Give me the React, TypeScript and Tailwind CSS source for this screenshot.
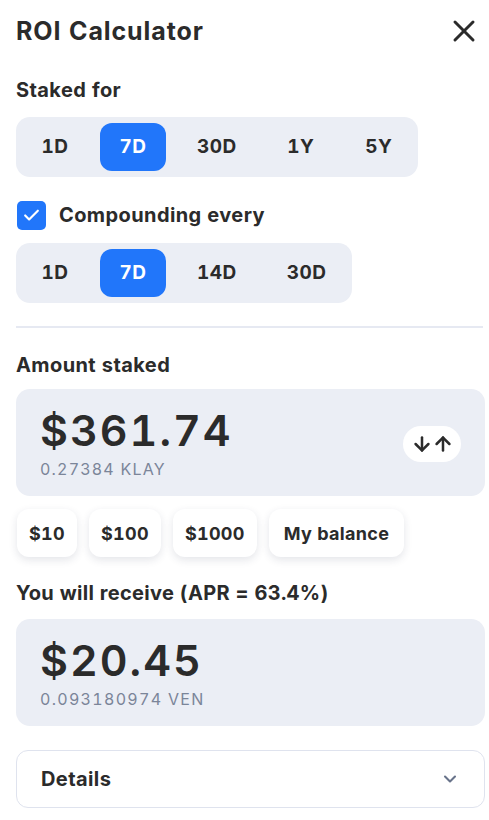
import React, { useState } from 'react';
import { X, ArrowDown, ArrowUp, ChevronDown, Check } from 'lucide-react';

const stakeOptions = ['1D', '7D', '30D', '1Y', '5Y'];
const compoundOptions = ['1D', '7D', '14D', '30D'];
const quickAmounts = ['$10', '$100', '$1000', 'My balance'];

interface SegmentProps {
    options: string[];
    value: string;
    onChange: (v: string) => void;
}

const Segment: React.FC<SegmentProps> = ({ options, value, onChange }) => (
    <div className="inline-flex gap-3 p-1.5 bg-[#ebeef5] rounded-[14px]">
        {options.map(opt => (
            <button
                key={opt}
                onClick={() => onChange(opt)}
                className={`h-12 min-w-[66px] px-[19px] rounded-[12px] text-[19px] font-bold tracking-[0.5px] ${
                    value === opt ? 'bg-[#2176fa] text-white' : 'text-[#2b2b2b]'
                }`}
            >
                {opt}
            </button>
        ))}
    </div>
);

const App: React.FC = () => {
    const [staked, setStaked] = useState('7D');
    const [compound, setCompound] = useState('7D');
    const [compounding, setCompounding] = useState(true);

    return (
        <div className="w-[489px] min-h-[820px] bg-white pl-4 pr-1 text-[#2b2b2b] font-['Inter',sans-serif] tabular-nums">
            <div className="flex items-center justify-between h-8 mt-[15px] pr-1">
                <h1 className="text-[25px] font-bold leading-8 tracking-[0.9px]">ROI Calculator</h1>
                <X size={36} strokeWidth={2} className="text-[#2b2b2b] -mr-[1px]" />
            </div>

            <div className="mt-[29px] text-[20px] font-bold leading-7 tracking-[0.4px]">Staked for</div>
            <div className="mt-[13px]">
                <Segment options={stakeOptions} value={staked} onChange={setStaked} />
            </div>

            <label className="flex items-center gap-[13px] mt-[23px] h-[30px] cursor-pointer">
                <span
                    onClick={() => setCompounding(!compounding)}
                    className="ml-[1px] w-[29px] h-[29px] rounded-[5px] bg-[#2176fa] flex items-center justify-center"
                >
                    {compounding && <Check size={19} strokeWidth={2.75} className="text-white" />}
                </span>
                <span className="text-[20px] font-bold tracking-[0.4px]">Compounding every</span>
            </label>
            <div className="mt-[13px]">
                <Segment options={compoundOptions} value={compound} onChange={setCompound} />
            </div>

            <div className="mt-[23px] h-[2px] bg-[#e6e9f2] mr-[2px]" />

            <div className="mt-[23px] text-[20px] font-bold leading-7 tracking-[0.4px]">Amount staked</div>
            <div className="mt-[10px] h-[107px] bg-[#ebeef5] rounded-[14px] pl-6 pr-6 flex items-center justify-between">
                <div className="flex flex-col">
                    <span className="text-[43px] font-semibold leading-[48px] tracking-[2px]">$361.74</span>
                    <span className="text-[16px] text-[#7b8599] leading-5 mt-[5px] tracking-[1.2px]">0.27384 KLAY</span>
                </div>
                <button className="w-[58px] h-9 rounded-full bg-white flex items-center justify-center mt-[2px]">
                    <ArrowDown size={22} strokeWidth={2.75} className="-mr-[1px]" />
                    <ArrowUp size={22} strokeWidth={2.75} />
                </button>
            </div>

            <div className="flex gap-3 mt-[13px] pl-[1px]">
                {quickAmounts.map(a => (
                    <button
                        key={a}
                        className={`h-12 rounded-[12px] bg-white text-[18px] font-bold tracking-[0.3px] shadow-[0_3px_8px_rgba(30,40,70,0.12)] ${
                            a === 'My balance' ? 'px-[15px]' : 'px-3'
                        }`}
                    >
                        {a}
                    </button>
                ))}
            </div>

            <div className="mt-[22px] text-[20px] font-bold leading-7 tracking-[0.3px]">You will receive (APR = 63.4%)</div>
            <div className="mt-[12px] h-[107px] bg-[#ebeef5] rounded-[14px] pl-6 flex flex-col justify-center">
                <span className="text-[43px] font-semibold leading-[48px] tracking-[2px]">$20.45</span>
                <span className="text-[16px] text-[#7b8599] leading-5 mt-[5px] tracking-[1.3px]">0.093180974 VEN</span>
            </div>

            <button className="mt-[24px] w-full h-[58px] border-[1.5px] border-[#dfe3ee] rounded-[12px] pl-6 pr-6 flex items-center justify-between">
                <span className="text-[20px] font-bold tracking-[0.4px]">Details</span>
                <ChevronDown size={20} strokeWidth={2.5} className="text-[#68738a]" />
            </button>
        </div>
    );
};

export default App;
